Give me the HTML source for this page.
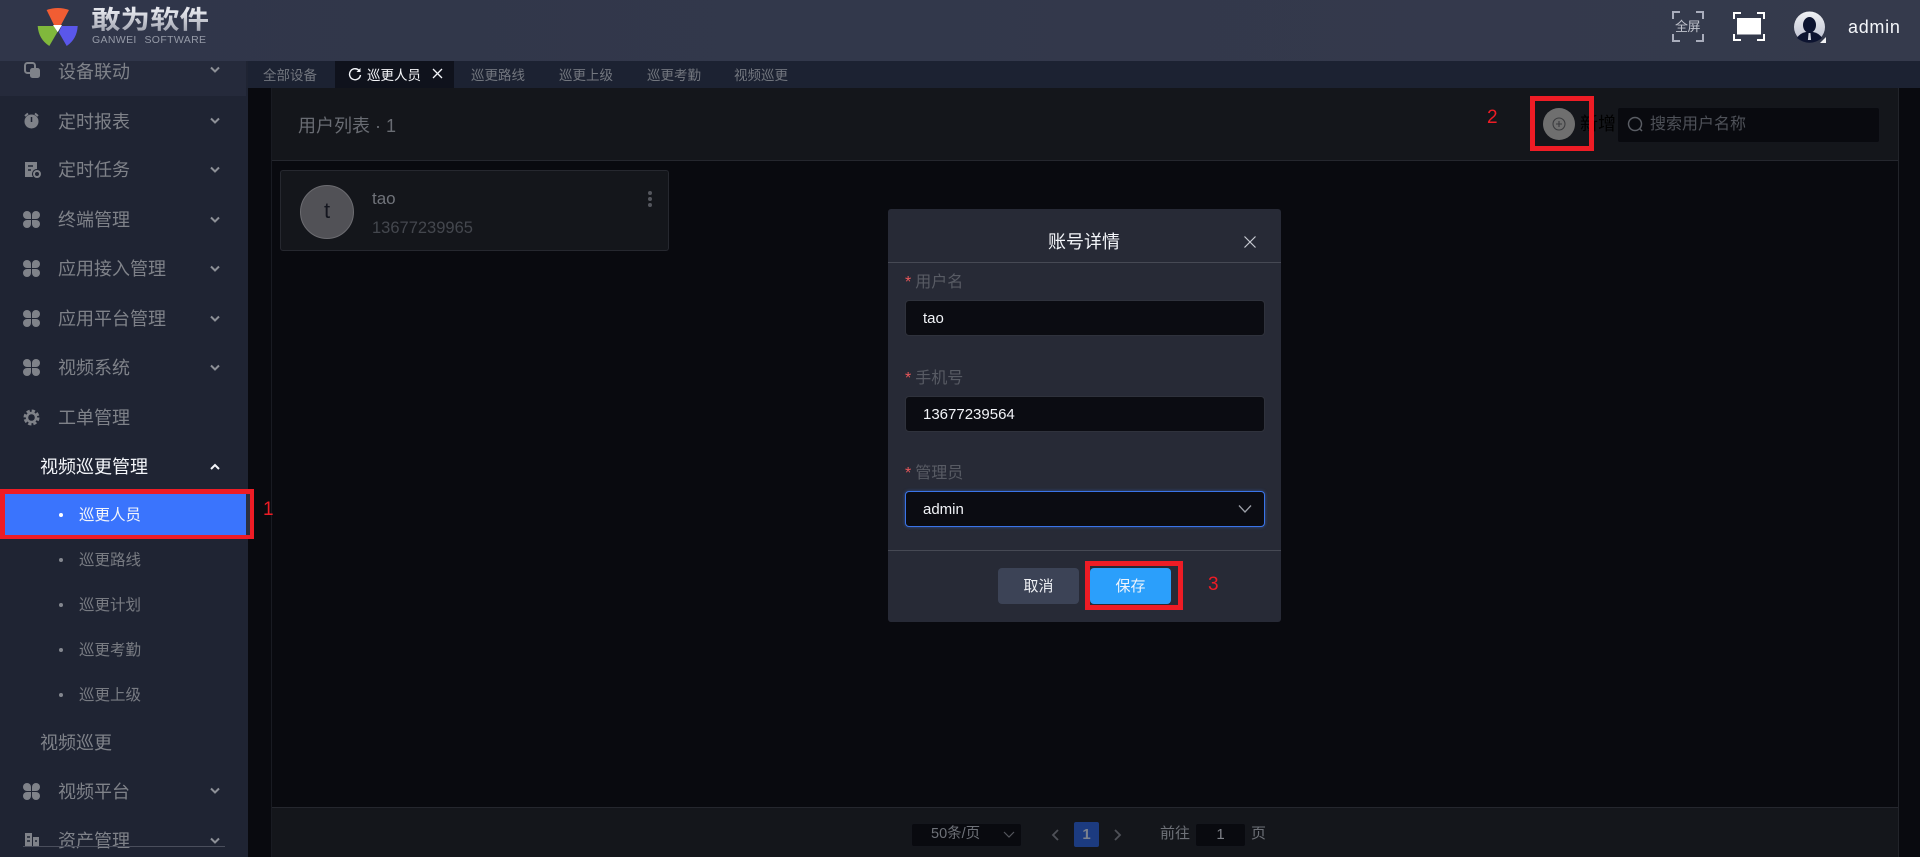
<!DOCTYPE html>
<html lang="zh-CN">
<head>
<meta charset="utf-8">
<title>巡更人员</title>
<style>
*{box-sizing:border-box;margin:0;padding:0}
html,body{width:1920px;height:857px;overflow:hidden;background:#090a0f;font-family:"Liberation Sans","Noto Sans CJK SC",sans-serif}
.a{position:absolute;white-space:nowrap}
.m{position:absolute;left:58px;font-size:18px;line-height:26px;color:#7f8289;white-space:nowrap}
.c{position:absolute;left:209px;width:12px;height:8px}
.i{position:absolute;left:23px;width:17px;height:17px}
.s{position:absolute;left:79px;font-size:15.5px;line-height:24px;color:#787b82;white-space:nowrap}
.d{position:absolute;left:59px;width:4px;height:4px;border-radius:2px;background:#84878f}
.t{position:absolute;top:66px;font-size:13.5px;line-height:20px;color:#73777f;white-space:nowrap}
.l{position:absolute;left:905px;font-size:16px;line-height:22px;color:#585b64;white-space:nowrap}
.l b{color:#e8575a;font-weight:400;margin-right:4px}
.inp{position:absolute;left:905px;width:360px;height:36px;background:#0b0c12;border:1px solid #2f323c;border-radius:4px;color:#f2f4f8;font-size:15px;line-height:36px;padding-left:17px}
.r{position:absolute;border:5px solid #ee1c25}
.n{position:absolute;color:#ee1c25;font-size:19px;line-height:22px}
</style>
</head>
<body>
<!-- header -->
<div class="a" style="left:0;top:0;width:1920px;height:61px;background:linear-gradient(90deg,#30364a,#353a4c)"></div>
<svg class="a" style="left:36px;top:6px" width="46" height="42" viewBox="0 0 46 42">
<path d="M10.600 4 Q22 0 33 4 L25 19 L18 19 Z" fill="#f15d33"/>
<path d="M1.700 20 L18.300 20 L21.300 26.300 L13.300 40 Q2.500 33 1.700 20 Z" fill="#80b83c"/>
<path d="M25.700 20 L41.700 20 Q41 33 30.700 40 L22.800 26.300 Z" fill="#5a57ea"/>
<path d="M17 19 L26 19 L21.700 26.300 Z" fill="#fff"/>
</svg>
<div class="a" style="left:91px;top:1px;font-size:29.500px;line-height:40px;font-weight:700;color:transparent;background:linear-gradient(#e4e6ec 20%,#a3a6b2 80%);-webkit-background-clip:text;background-clip:text;transform:scaleY(.86);transform-origin:50% 50%">敢为软件</div>
<div class="a" style="left:92px;top:34px;font-size:10.500px;line-height:13px;letter-spacing:.35px;word-spacing:4.500px;color:#959aa7">GANWEI SOFTWARE</div>
<svg class="a" style="left:1672px;top:11px" width="32" height="31" viewBox="0 0 32 31" fill="none" stroke="#a9adbc" stroke-width="2">
<path d="M1 8V1H8M24 1H31V8M1 23V30H8M24 30H31V23"/>
</svg>
<div class="a" style="left:1675px;top:19px;width:27px;font-size:13px;line-height:16px;color:#c0c3cc;letter-spacing:-.5px">全屏</div>
<svg class="a" style="left:1733px;top:12px" width="32" height="29" viewBox="0 0 32 29" fill="none" stroke="#fff" stroke-width="2">
<path d="M1 7V1H8M24 1H31V7M1 22V28H8M24 28H31V22"/>
<rect x="4" y="6" width="24" height="16.500" fill="#fff" stroke="none"/>
</svg>
<svg class="a" style="left:1794px;top:11px" width="32" height="32" viewBox="0 0 32 32">
<defs><linearGradient id="g" x1="0" y1="0" x2="0" y2="1"><stop offset="0" stop-color="#f0f1f4"/><stop offset="1" stop-color="#b9bdce"/></linearGradient></defs>
<circle cx="15.500" cy="16" r="15.500" fill="url(#g)"/>
<ellipse cx="15.500" cy="14" rx="6.500" ry="8" fill="#0d1430"/>
<path d="M3 27 Q6 22 12 21 L19 21 Q25 22 28 27 Q22 31.800 15.500 31.800 Q9 31.800 3 27Z" fill="#0d1430"/>
<path d="M14.600 22h1.800l.7 7h-3.200z" fill="#cfd3de"/>
<path d="M32 26V32H26Z" fill="#f2f2f4"/>
</svg>
<div class="a" style="left:1848px;top:15px;font-size:18px;line-height:24px;color:#f4f6fa;letter-spacing:.7px">admin</div>

<!-- sidebar -->
<div class="a" style="left:0;top:61px;width:248px;height:796px;background:#1f2433"></div>
<div class="a" style="left:0;top:61px;width:246px;height:35px;background:#252a3b"></div>
<svg width="0" height="0" style="position:absolute"><defs>
<symbol id="clover" viewBox="0 0 17 17"><g fill="#7f8289"><path d="M8 8H4A4 4 0 1 1 8 4Z"/><path d="M9 8V4A4 4 0 1 1 13 8Z"/><path d="M8 9V13A4 4 0 1 1 4 9Z"/><path d="M9 9H13A4 4 0 1 1 9 13Z"/></g></symbol>
<symbol id="chev" viewBox="0 0 12 8"><path d="M2 1.500L6 5.500L10 1.500" fill="none" stroke="#8d9097" stroke-width="2"/></symbol>
</defs></svg>

<svg class="i" style="top:62px;left:24px" viewBox="0 0 17 17"><rect x="1" y="1" width="10" height="10" rx="2.500" fill="none" stroke="#7f8289" stroke-width="2"/><rect x="6" y="6" width="10" height="10" rx="2.500" fill="#7f8289"/></svg>
<div class="m" style="top:59px">设备联动</div><svg class="c" style="top:66px"><use href="#chev"/></svg>
<svg class="i" style="top:112px;left:23px" viewBox="0 0 17 17"><circle cx="8.500" cy="9.500" r="7" fill="#7f8289"/><path d="M2 4L5 1.500M15 4L12 1.500" stroke="#7f8289" stroke-width="2"/><path d="M8.500 5v5" stroke="#1f2433" stroke-width="1.500"/></svg>
<div class="m" style="top:109px">定时报表</div><svg class="c" style="top:117px"><use href="#chev"/></svg>
<svg class="i" style="top:161px;left:24px" viewBox="0 0 17 17"><path d="M1 1h12v7a5 5 0 0 0-4 8H1z" fill="#7f8289"/><circle cx="13" cy="13" r="3" fill="none" stroke="#7f8289" stroke-width="2"/><path d="M4 5h5M4 9h3" stroke="#1f2433" stroke-width="1.500"/></svg>
<div class="m" style="top:157px">定时任务</div><svg class="c" style="top:166px"><use href="#chev"/></svg>
<svg class="i" style="top:211px"><use href="#clover"/></svg>
<div class="m" style="top:207px">终端管理</div><svg class="c" style="top:216px"><use href="#chev"/></svg>
<svg class="i" style="top:260px"><use href="#clover"/></svg>
<div class="m" style="top:256px">应用接入管理</div><svg class="c" style="top:265px"><use href="#chev"/></svg>
<svg class="i" style="top:310px"><use href="#clover"/></svg>
<div class="m" style="top:306px">应用平台管理</div><svg class="c" style="top:315px"><use href="#chev"/></svg>
<svg class="i" style="top:359px"><use href="#clover"/></svg>
<div class="m" style="top:355px">视频系统</div><svg class="c" style="top:364px"><use href="#chev"/></svg>
<svg class="i" style="top:409px" viewBox="0 0 17 17"><circle cx="8.500" cy="8.500" r="6.700" fill="none" stroke="#7f8289" stroke-width="2.600" stroke-dasharray="3.300 1.960"/><circle cx="8.500" cy="8.500" r="4.500" fill="none" stroke="#7f8289" stroke-width="2.400"/></svg>
<div class="m" style="top:405px">工单管理</div>
<div class="m" style="top:454px;left:40px;color:#f4f6fa">视频巡更管理</div>
<svg class="c" style="top:463px"><path d="M2 6L6 2L10 6" fill="none" stroke="#f4f6fa" stroke-width="2"/></svg>

<div class="a" style="left:5px;top:494px;width:241px;height:41px;background:#3a74fd"></div>
<div class="a" style="left:246px;top:494px;width:4px;height:41px;background:#2a3042"></div>
<div class="d" style="top:513px;background:#fff"></div>
<div class="s" style="top:504px;color:#f4f6fa">巡更人员</div>
<div class="d" style="top:558px"></div><div class="s" style="top:549px">巡更路线</div>
<div class="d" style="top:603px"></div><div class="s" style="top:594px">巡更计划</div>
<div class="d" style="top:648px"></div><div class="s" style="top:639px">巡更考勤</div>
<div class="d" style="top:693px"></div><div class="s" style="top:684px">巡更上级</div>
<div class="m" style="top:730px;left:40px">视频巡更</div>
<svg class="i" style="top:783px"><use href="#clover"/></svg>
<div class="m" style="top:779px">视频平台</div><svg class="c" style="top:787px"><use href="#chev"/></svg>
<svg class="i" style="top:832px;left:24px" viewBox="0 0 17 17"><path d="M1 1h7v13H1zM9 5h6v9H9z" fill="#7f8289"/><path d="M3 5h3M3 9h3M11 9h2" stroke="#1f2433" stroke-width="1.500"/></svg>
<div class="m" style="top:828px">资产管理</div><svg class="c" style="top:837px"><use href="#chev"/></svg>
<div class="a" style="left:23px;top:846px;width:202px;height:1px;background:#4a4e5c"></div>

<!-- tabs -->
<div class="a" style="left:248px;top:61px;width:1672px;height:27px;background:#1c2232"></div>
<div class="a" style="left:335px;top:61px;width:119px;height:27px;background:#0f121c"></div>
<div class="t" style="left:263px">全部设备</div>
<svg class="a" style="left:348px;top:67px" width="14" height="14" viewBox="0 0 14 14"><path d="M11.500 4A5.500 5.500 0 1 0 12.500 8" fill="none" stroke="#f4f6fa" stroke-width="1.400"/><path d="M12.500 1v4h-4z" fill="#f4f6fa"/></svg>
<div class="t" style="left:367px;color:#f6f7fa">巡更人员</div>
<svg class="a" style="left:432px;top:68px" width="11" height="11" viewBox="0 0 11 11"><path d="M1 1L10 10M10 1L1 10" stroke="#f4f6fa" stroke-width="1.300"/></svg>
<div class="t" style="left:471px">巡更路线</div>
<div class="t" style="left:559px">巡更上级</div>
<div class="t" style="left:647px">巡更考勤</div>
<div class="t" style="left:734px">视频巡更</div>

<!-- content -->
<div class="a" style="left:271px;top:88px;width:1px;height:769px;background:#191b22"></div>
<div class="a" style="left:1898px;top:88px;width:1px;height:769px;background:#22242a"></div>
<div class="a" style="left:272px;top:88px;width:1626px;height:73px;background:#14161b;border-bottom:1px solid #25272e"></div>
<div class="a" style="left:298px;top:112px;font-size:18px;line-height:28px;color:#696c73">用户列表 · 1</div>
<div class="a" style="left:1617px;top:107px;width:263px;height:36px;background:#090a0f;border:1px solid #14161c;border-radius:3px"></div>
<svg class="a" style="left:1627px;top:116px" width="17" height="17" viewBox="0 0 17 17" fill="none" stroke="#5a5d64" stroke-width="1.500"><circle cx="8" cy="8" r="6.500"/><path d="M12.500 12.500L15 15"/></svg>
<div class="a" style="left:1650px;top:113px;font-size:16px;line-height:24px;color:#4e5158">搜索用户名称</div>
<div class="a" style="left:1543px;top:108px;width:32px;height:32px;border-radius:16px;background:#6f6f6f"></div>
<svg class="a" style="left:1552px;top:117px" width="14" height="14" viewBox="0 0 14 14" fill="none" stroke="#3a3b3e" stroke-width="1.100"><circle cx="7" cy="7" r="6"/><path d="M7 4v6M4 7h6"/></svg>
<div class="a" style="left:1580px;top:111px;font-size:18px;line-height:26px;color:#000">新增</div>

<div class="a" style="left:280px;top:170px;width:389px;height:81px;background:#14161b;border:1px solid #26282f;border-radius:3px"></div>
<div class="a" style="left:300px;top:185px;width:54px;height:54px;border-radius:27px;background:#515156;border:1px solid #6c6c71;text-align:center;font-size:22px;line-height:50px;color:#14161f">t</div>
<div class="a" style="left:372px;top:187px;font-size:17px;line-height:24px;color:#70737a">tao</div>
<div class="a" style="left:372px;top:216px;font-size:16.500px;line-height:24px;color:#44474e">13677239965</div>
<div class="a" style="left:648px;top:191px;width:4px;height:4px;border-radius:2px;background:#54565d"></div>
<div class="a" style="left:648px;top:197px;width:4px;height:4px;border-radius:2px;background:#54565d"></div>
<div class="a" style="left:648px;top:203px;width:4px;height:4px;border-radius:2px;background:#54565d"></div>

<!-- footer -->
<div class="a" style="left:272px;top:807px;width:1626px;height:50px;background:#14161b;border-top:1px solid #25272e"></div>
<div class="a" style="left:911px;top:823px;width:111px;height:24px;background:#090a0f;border:1px solid #14161c;border-radius:3px"></div>
<div class="a" style="left:931px;top:822px;font-size:14.500px;line-height:24px;color:#6e7178">50条/页</div>
<svg class="a" style="left:1002px;top:831px" width="14" height="8" viewBox="0 0 14 8"><path d="M2 1L7 6L12 1" fill="none" stroke="#54565d" stroke-width="1.200"/></svg>
<svg class="a" style="left:1050px;top:828px" width="10" height="14" viewBox="0 0 10 14"><path d="M8 2L3 7L8 12" fill="none" stroke="#4f5158" stroke-width="1.800"/></svg>
<div class="a" style="left:1074px;top:822px;width:25px;height:25px;background:#1c3b80;border-radius:2px;text-align:center;font-size:15px;font-weight:700;line-height:26px;color:#7a818f">1</div>
<svg class="a" style="left:1113px;top:828px" width="10" height="14" viewBox="0 0 10 14"><path d="M2 2L7 7L2 12" fill="none" stroke="#4f5158" stroke-width="1.800"/></svg>
<div class="a" style="left:1160px;top:822px;font-size:15px;line-height:24px;color:#6e7178">前往</div>
<div class="a" style="left:1195px;top:823px;width:51px;height:24px;background:#090a0f;border:1px solid #14161c;border-radius:3px;text-align:center;font-size:15px;line-height:22px;color:#7e8188">1</div>
<div class="a" style="left:1251px;top:822px;font-size:15px;line-height:24px;color:#6e7178">页</div>

<!-- dialog -->
<div class="a" style="left:888px;top:209px;width:393px;height:413px;background:#272a36;border-radius:3px"></div>
<div class="a" style="left:888px;top:262px;width:393px;height:1px;background:#464954"></div>
<div class="a" style="left:1048px;top:229px;font-size:18px;line-height:26px;color:#f4f6fa">账号详情</div>
<svg class="a" style="left:1243px;top:235px" width="14" height="14" viewBox="0 0 14 14"><path d="M1.500 1.500L12.500 12.500M12.500 1.500L1.500 12.500" stroke="#c8cbd2" stroke-width="1.200"/></svg>
<div class="l" style="top:272px"><b>*</b>用户名</div>
<div class="inp" style="top:300px">tao</div>
<div class="l" style="top:368px"><b>*</b>手机号</div>
<div class="inp" style="top:396px">13677239564</div>
<div class="l" style="top:463px"><b>*</b>管理员</div>
<div class="inp" style="top:491px;border-color:#3a74e8;box-shadow:0 0 3px rgba(58,116,232,.5)">admin</div>
<svg class="a" style="left:1237px;top:504px" width="16" height="10" viewBox="0 0 16 10"><path d="M2 1.500L8 8L14 1.500" fill="none" stroke="#9da0a8" stroke-width="1.300"/></svg>
<div class="a" style="left:888px;top:550px;width:393px;height:1px;background:#464954"></div>
<div class="a" style="left:998px;top:568px;width:81px;height:36px;background:#3c4356;border-radius:4px;text-align:center;font-size:15px;line-height:38px;color:#eef0f4">取消</div>
<div class="a" style="left:1090px;top:568px;width:81px;height:36px;background:#2b9ffb;border-radius:4px;text-align:center;font-size:15px;line-height:38px;color:#eef4fb">保存</div>

<!-- annotations -->
<div class="r" style="left:0;top:489px;width:254px;height:50px;border-right-width:4px;border-bottom-width:4px"></div>
<div class="r" style="left:1530px;top:96px;width:64px;height:55px"></div>
<div class="r" style="left:1085px;top:561px;width:98px;height:49px"></div>
<div class="n" style="left:263px;top:499px">1</div>
<div class="n" style="left:1487px;top:107px">2</div>
<div class="n" style="left:1208px;top:574px">3</div>
</body>
</html>
